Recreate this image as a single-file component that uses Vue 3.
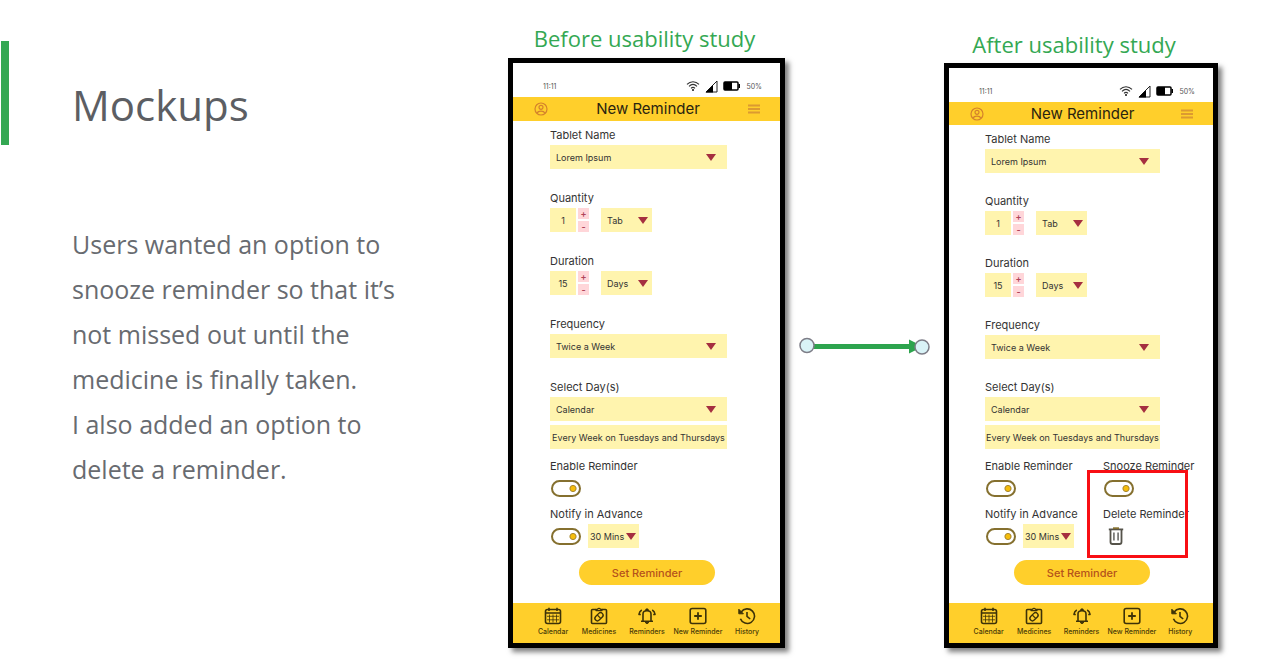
<script setup>
import { reactive } from 'vue'

const phones = reactive([
  { id: 'before', caption: 'Before usability study', extras: false },
  { id: 'after', caption: 'After usability study', extras: true }
].map((p) => ({ ...p, quantity: '1', duration: '15', enabled: true, notify: true, snooze: true })))

const tabs = ['Calendar', 'Medicines', 'Reminders', 'New Reminder', 'History']

function step(phone, key, by) {
  phone[key] = String(Math.max(0, Number(phone[key]) + by))
}
</script>

<template>
  <main class="slide">
    <section class="copy">
      <h1>Mockups</h1>
      <div class="story">
        <p>Users wanted an option to snooze reminder so that it’s not missed out until the medicine is finally taken.</p>
        <p>I also added an option to delete a reminder.</p>
      </div>
    </section>

    <svg class="arrow" viewBox="0 0 132 18" aria-hidden="true">
      <path d="M10 9.5H112" stroke="#2da44e" stroke-width="5" />
      <path d="M110 2.5L124 9.5L110 16.5Z" fill="#2da44e" />
      <circle cx="8" cy="8.5" r="7" fill="#d9f3f7" stroke="#7d7d87" stroke-width="1.5" />
      <circle cx="123" cy="10" r="7" fill="#d9f3f7" stroke="#7d7d87" stroke-width="1.5" />
    </svg>

    <figure v-for="phone in phones" :key="phone.id" class="mock" :class="phone.id">
      <figcaption>{{ phone.caption }}</figcaption>
      <div class="phone">
        <div class="status">
          <span class="time">11:11</span>
          <svg width="14" height="12" viewBox="0 0 14 12" fill="none" stroke="#333" stroke-width="1.1">
            <path d="M1 4.4C4.4 .8 9.6 .8 13 4.4M3 6.4C5.4 4 8.6 4 11 6.4M5 8.3C6.2 7.1 7.8 7.1 9 8.3" />
            <circle cx="7" cy="10" r="1" fill="#111" stroke="none" />
          </svg>
          <svg width="13" height="13" viewBox="0 0 13 13">
            <path d="M1 12L12 1V12Z" fill="#fff" stroke="#222" />
            <path d="M.5 12.5L8 5V12.5Z" fill="#000" />
          </svg>
          <svg width="18" height="10" viewBox="0 0 18 10">
            <rect x="1" y="1" width="14" height="8" rx="1" fill="#fff" stroke="#000" stroke-width="1.5" />
            <path d="M1 1H9V9H1Z" />
            <path d="M15.5 3H17V7H15.5Z" />
          </svg>
          <span class="charge">50%</span>
        </div>

        <header class="bar">
          <button type="button" class="icon" aria-label="Account">
            <svg width="14" height="14" viewBox="0 0 14 14" fill="none" stroke="#d4822c" stroke-width="1.2">
              <circle cx="7" cy="7" r="6" />
              <circle cx="7" cy="5.3" r="2" />
              <path d="M3.2 11C4.2 8.4 9.8 8.4 10.8 11" />
            </svg>
          </button>
          <h2>New Reminder</h2>
          <button type="button" class="icon" aria-label="Menu">
            <svg width="12" height="10" viewBox="0 0 12 10" stroke="#dc9a31" stroke-width="2">
              <path d="M0 1.5H12M0 5H12M0 8.5H12" />
            </svg>
          </button>
        </header>

        <form class="form" @submit.prevent>
          <div class="group">
            <label :for="phone.id + '-tablet'">Tablet Name</label>
            <span class="pick">
              <select :id="phone.id + '-tablet'"><option>Lorem Ipsum</option></select>
              <svg class="caret" viewBox="0 0 10 7"><path d="M0 0H10L5 7Z" /></svg>
            </span>
          </div>

          <div class="group">
            <label :for="phone.id + '-quantity'">Quantity</label>
            <div class="row">
              <input :id="phone.id + '-quantity'" v-model="phone.quantity" class="num" type="text" inputmode="numeric">
              <span class="steps">
                <button type="button" aria-label="More" @click="step(phone, 'quantity', 1)">+</button>
                <button type="button" aria-label="Less" @click="step(phone, 'quantity', -1)">-</button>
              </span>
              <span class="pick small">
                <select aria-label="Quantity unit"><option>Tab</option></select>
                <svg class="caret" viewBox="0 0 10 7"><path d="M0 0H10L5 7Z" /></svg>
              </span>
            </div>
          </div>

          <div class="group">
            <label :for="phone.id + '-duration'">Duration</label>
            <div class="row">
              <input :id="phone.id + '-duration'" v-model="phone.duration" class="num" type="text" inputmode="numeric">
              <span class="steps">
                <button type="button" aria-label="More" @click="step(phone, 'duration', 1)">+</button>
                <button type="button" aria-label="Less" @click="step(phone, 'duration', -1)">-</button>
              </span>
              <span class="pick small">
                <select aria-label="Duration unit"><option>Days</option></select>
                <svg class="caret" viewBox="0 0 10 7"><path d="M0 0H10L5 7Z" /></svg>
              </span>
            </div>
          </div>

          <div class="group">
            <label :for="phone.id + '-frequency'">Frequency</label>
            <span class="pick">
              <select :id="phone.id + '-frequency'"><option>Twice a Week</option></select>
              <svg class="caret" viewBox="0 0 10 7"><path d="M0 0H10L5 7Z" /></svg>
            </span>
          </div>

          <div class="group">
            <label :for="phone.id + '-days'">Select Day(s)</label>
            <span class="pick">
              <select :id="phone.id + '-days'"><option>Calendar</option></select>
              <svg class="caret" viewBox="0 0 10 7"><path d="M0 0H10L5 7Z" /></svg>
            </span>
            <input class="summary" type="text" aria-label="Schedule" value="Every Week on Tuesdays and Thursdays" readonly>
          </div>

          <div class="options">
            <div class="option">
              <label :for="phone.id + '-enable'">Enable Reminder</label>
              <div class="control">
                <input :id="phone.id + '-enable'" v-model="phone.enabled" class="toggle" type="checkbox">
              </div>
            </div>
            <div v-if="phone.extras" class="option">
              <label :for="phone.id + '-snooze'">Snooze Reminder</label>
              <div class="control">
                <input :id="phone.id + '-snooze'" v-model="phone.snooze" class="toggle" type="checkbox">
              </div>
            </div>
            <div class="option first">
              <label :for="phone.id + '-notify'">Notify in Advance</label>
              <div class="control">
                <input :id="phone.id + '-notify'" v-model="phone.notify" class="toggle" type="checkbox">
                <span class="pick small mins">
                  <select aria-label="Notice period"><option>30 Mins</option></select>
                  <svg class="caret" viewBox="0 0 10 7"><path d="M0 0H10L5 7Z" /></svg>
                </span>
              </div>
            </div>
            <div v-if="phone.extras" class="option">
              <label :for="phone.id + '-delete'">Delete Reminder</label>
              <div class="control">
                <button :id="phone.id + '-delete'" type="button" class="icon trash">
                  <svg width="16" height="18" viewBox="0 0 16 18" fill="none" stroke="#55534a" stroke-width="1.8">
                    <path d="M2.5 3V15Q2.5 17 4.5 17H11.5Q13.5 17 13.5 15V3" />
                    <path d="M.8 2.4H15.2" />
                    <path d="M5 1.2H11" stroke="#85702f" />
                    <path d="M5.9 5.5V13.5M10.1 5.5V13.5" stroke="#7c7c7a" stroke-width="1.8" />
                  </svg>
                </button>
              </div>
            </div>
            <div v-if="phone.extras" class="marker" />
          </div>

          <button type="submit" class="submit">Set Reminder</button>
        </form>

        <nav class="tabs">
          <a v-for="(tab, i) in tabs" :key="tab" href="#">
            <svg width="18" height="18" viewBox="0 0 18 18" fill="none" stroke="#3d3208" stroke-width="1.6" stroke-linejoin="round">
              <g v-if="i === 0">
                <rect x="1.5" y="2.5" width="15" height="14" rx="2" />
                <path d="M1.5 6H16.5M5 .8V4M13 .8V4" />
                <path d="M3 9.3H15M3 12.8H15M5.5 7.5V15.5M9 7.5V15.5M12.5 7.5V15.5" stroke-width=".8" />
              </g>
              <g v-else-if="i === 1">
                <path d="M6 2.5H2.5Q1.5 2.5 1.5 3.5V15.5Q1.5 16.5 2.5 16.5H15.5Q16.5 16.5 16.5 15.5V3.5Q16.5 2.5 15.5 2.5H12" />
                <path d="M6 3.6V2.4H7.3Q9 .2 10.7 2.4H12V3.6Z" stroke-width="1.2" />
                <rect x="4.3" y="7.2" width="9.4" height="5" rx="2.5" transform="rotate(-45 9 9.7)" stroke-width="1.4" />
                <path d="M7.4 8.1L10.7 11.4" stroke-width="1.3" />
              </g>
              <g v-else-if="i === 2">
                <path d="M5 14V7Q5 3.8 9 3.8Q13 3.8 13 7V14M3 14.2H15" />
                <path d="M7.8 3.2Q9 .8 10.2 3.2Z" />
                <path d="M7.2 15.4Q9 18 10.8 15.4Z" fill="#3d3208" stroke-width="1" />
                <path d="M3.8 3Q1.4 4.3 .9 7.4H2.8M14.2 3Q16.6 4.3 17.1 7.4H15.2" stroke-width="1.5" />
              </g>
              <g v-else-if="i === 3">
                <rect x="1.2" y="1.5" width="15.6" height="15" rx="2" />
                <path d="M9 5.2V12.8M5.2 9H12.8" stroke-width="1.8" />
              </g>
              <g v-else>
                <path d="M3.2 5A7.3 7.3 0 1 1 2.4 11.8" />
                <path d="M.8 2.2V6.8H5.4Z" fill="#3d3208" stroke-width="1" />
                <path d="M9 5V9.4L12.2 12" />
              </g>
            </svg>
            <span>{{ tab }}</span>
          </a>
        </nav>
      </div>
    </figure>
  </main>
</template>

<style>
body {
  margin: 0;
  background: #fff;
}
</style>

<style scoped>
.slide {
  display: grid;
  grid-template-columns: minmax(0, 508fr) minmax(0, 277fr) minmax(0, 159fr) minmax(0, 274fr) minmax(0, 50fr);
  align-items: start;
  min-height: 100vh;
  box-sizing: border-box;
  font-family: "Open Sans", "Noto Sans", sans-serif;
}

.copy {
  grid-area: 1 / 1;
  margin: 41px 0 0 1px;
  color: #686b70;
}

h1 {
  margin: 0;
  height: 104px;
  padding: 34px 0 0 63px;
  box-sizing: border-box;
  border-left: 8px solid #34a853;
  font-size: 42px;
  line-height: 60px;
  font-weight: 400;
  color: #5c5e63;
}

.story {
  max-width: 350px;
  margin: 77px 0 0 71px;
  font-size: 25px;
  line-height: 45px;
}

.story p {
  margin: 0;
}

.mock {
  --gap: 19px;
  --bar: 24px;
  --left: 37px;
  grid-area: 1 / 2;
  margin: 23px 0 0;
}

.mock.after {
  --gap: 18px;
  --bar: 23px;
  --left: 36px;
  grid-area: 1 / 4;
  margin-top: 29px;
}

.arrow {
  grid-area: 1 / 3;
  width: 132px;
  justify-self: center;
  margin-top: 337px;
}

figcaption {
  padding-right: 4px;
  margin-bottom: 5px;
  text-align: center;
  white-space: nowrap;
  font-size: 22px;
  line-height: 30px;
  color: #34a853;
}

.after figcaption {
  padding-right: 14px;
  margin-bottom: 4px;
}

.phone {
  border: 5px solid #000;
  background: #fff;
  box-shadow: 4px 4px 5px rgba(0, 0, 0, 0.5);
  font-family: Inter, "Liberation Sans", sans-serif;
  color: #333;
}

.status {
  display: flex;
  align-items: center;
  height: 34px;
  padding: 12px 18px 0 30px;
  box-sizing: border-box;
  gap: 5px;
  font-size: 7px;
  color: #555;
}

.time {
  flex: 1;
}

.bar {
  display: flex;
  align-items: center;
  justify-content: space-between;
  height: var(--bar);
  padding: 0 20px 0 21px;
  background: #ffcf2b;
}

h2 {
  margin: 0;
  font-size: 15px;
  font-weight: 400;
  line-height: 24px;
  color: #2a2410;
}

button,
input,
select {
  margin: 0;
  padding: 0;
  border: 0;
  border-radius: 0;
  appearance: none;
  font: inherit;
  color: inherit;
  background: none;
}

.icon {
  display: flex;
}

.form {
  display: flex;
  flex-direction: column;
  padding: 4px 53px 18px var(--left);
}

.group {
  display: flex;
  flex-direction: column;
  margin-bottom: var(--gap);
}

label {
  font-size: 11px;
  line-height: 20px;
  white-space: nowrap;
}

.pick {
  display: grid;
  font-size: 9px;
}

.pick select {
  grid-area: 1 / 1;
  height: 24px;
  padding: 0 6px;
  background: #fff4ae;
}

.caret {
  grid-area: 1 / 1;
  align-self: center;
  justify-self: end;
  width: 10px;
  height: 7px;
  margin-right: 11px;
  fill: #a52f40;
  pointer-events: none;
}

.small {
  width: 51px;
}

.small .caret {
  margin-right: 4px;
}

.row {
  display: flex;
}

.num {
  width: 26px;
  height: 24px;
  text-align: center;
  font-size: 9px;
  background: #fff4ae;
}

.steps {
  display: flex;
  flex-direction: column;
  gap: 2px;
  margin: 0 12px 0 2px;
}

.steps button {
  width: 11px;
  height: 11px;
  font-size: 9px;
  line-height: 11px;
  font-weight: 600;
  color: #b0445a;
  background: #ffd6d9;
}

.summary {
  height: 24px;
  margin-top: 4px;
  text-align: center;
  font-size: 9px;
  background: #fff4ae;
}

.options {
  display: grid;
  position: relative;
  grid-template-columns: 118px minmax(0, 1fr);
  row-gap: 4px;
  margin-top: calc(7px - var(--gap));
}

.option {
  display: flex;
  flex-direction: column;
}

.first {
  grid-column: 1;
}

.control {
  display: flex;
  align-items: center;
  gap: 7px;
  height: 24px;
}

.toggle {
  width: 30px;
  height: 17px;
  margin-left: 1px;
  box-sizing: border-box;
  border: 2px solid #85702f;
  border-radius: 9px;
  background: #fff;
}

.toggle:checked {
  background: radial-gradient(circle at 20px 50%, #f5bd0c 2px, #a8862a 3px, #fff 4px);
}

.mins select {
  padding: 0 2px;
}

.mins .caret {
  margin-right: 3px;
}

.trash {
  margin-left: 5px;
}

.marker {
  position: absolute;
  left: 102px;
  top: 14px;
  width: 101px;
  height: 88px;
  box-sizing: border-box;
  border: 3px solid #f80f14;
}

.submit {
  width: 136px;
  height: 25px;
  margin: 12px 0 0 29px;
  border-radius: 13px;
  background: #ffcf2b;
  font-size: 11px;
  font-weight: 500;
  color: #b5521b;
}

.tabs {
  display: grid;
  grid-template-columns: 48fr 44fr 52fr 50fr 48fr;
  height: 40px;
  padding: 4px 9px 0 16px;
  box-sizing: border-box;
  background: #ffcf2b;
}

.tabs a {
  display: flex;
  flex-direction: column;
  align-items: center;
  min-width: 0;
  gap: 2px;
  font-size: 7px;
  font-weight: 500;
  line-height: 10px;
  white-space: nowrap;
  text-decoration: none;
  color: #4a3b08;
}
</style>
